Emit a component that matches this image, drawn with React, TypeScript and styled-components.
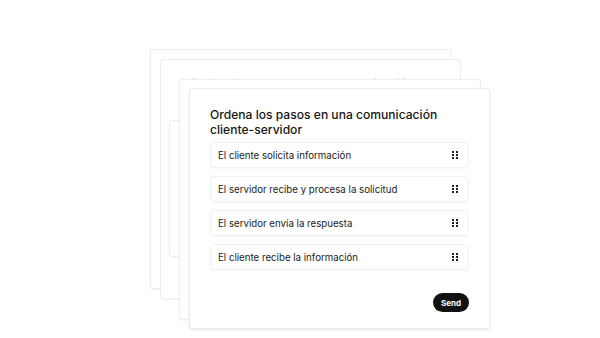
import React from "react";
import styled, { createGlobalStyle } from "styled-components";

const Global = createGlobalStyle`
  html, body { margin: 0; padding: 0; background: #ffffff; }
  body { font-family: Inter, "Noto Sans", sans-serif; color: #1a1a1a; }
`;

const Stage = styled.div`
  position: relative;
  width: 600px;
  height: 338px;
  overflow: hidden;
  background: #ffffff;
`;

const Card = styled.div<{ $x: number; $y: number; $w: number; $h: number; $front?: boolean }>`
  position: absolute;
  left: ${(p) => p.$x}px;
  top: ${(p) => p.$y}px;
  width: ${(p) => p.$w}px;
  height: ${(p) => p.$h}px;
  box-sizing: border-box;
  background: #ffffff;
  border: 1px solid ${(p) => (p.$front ? "#ececec" : "#ededed")};
  border-radius: 3px;
  box-shadow: ${(p) =>
    p.$front ? "0 1px 3px rgba(0,0,0,0.10)" : "0 1px 2px rgba(0,0,0,0.04)"};
  display: flex;
  flex-direction: column;
  padding: 18px 20px 16px 20px;
`;

const GhostText = styled.div`
  font-size: 12px;
  font-weight: 500;
  color: #e2e2e2;
  margin-top: -3px;
  margin-left: 8px;
  white-space: nowrap;
  filter: blur(0.5px);
`;

const Title = styled.h2`
  margin: 0;
  font-size: 12.1px;
  line-height: 15px;
  font-weight: 500;
  color: #161616;
`;

const List = styled.div`
  display: flex;
  flex-direction: column;
  gap: 8px;
  margin-top: 5px;
`;

const Row = styled.div`
  display: flex;
  align-items: center;
  justify-content: space-between;
  height: 26px;
  box-sizing: border-box;
  padding: 0 10px 0 7px;
  border: 1px solid #f1f1f1;
  border-radius: 3px;
  box-shadow: 0 1px 1px rgba(0, 0, 0, 0.03);
  font-size: 9.7px;
  color: #222;
`;

const Footer = styled.div`
  margin-top: auto;
  display: flex;
  justify-content: flex-end;
`;

const SendButton = styled.button`
  width: 36px;
  height: 19px;
  border: none;
  border-radius: 10px;
  background: #121212;
  color: #fff;
  font-family: Inter, sans-serif;
  font-size: 8px;
  font-weight: 700;
  padding: 0;
`;

const Grip = () => (
  <svg width="6" height="8" viewBox="0 0 6 8">
    {[0, 3, 6].map((y) =>
      [0, 4].map((x) => <rect key={`${x}-${y}`} x={x} y={y} width="2" height="2" fill="#222" />)
    )}
  </svg>
);

const steps = [
  "El cliente solicita información",
  "El servidor recibe y procesa la solicitud",
  "El servidor envía la respuesta",
  "El cliente recibe la información",
];

export default function App() {
  return (
    <>
      <Global />
      <Stage>
        <Card $x={150} $y={49} $w={301} $h={240} />
        <Card $x={160} $y={59} $w={301} $h={240}>
          <GhostText>Ordena los pasos en una comunicación</GhostText>
        </Card>
        <Card $x={169} $y={120} $w={40} $h={137} />
        <Card $x={179} $y={79} $w={302} $h={241} />
        <Card $x={189} $y={88} $w={301} $h={241} $front>
          <Title>
            Ordena los pasos en una comunicación
            <br />
            cliente-servidor
          </Title>
          <List>
            {steps.map((s) => (
              <Row key={s}>
                <span>{s}</span>
                <Grip />
              </Row>
            ))}
          </List>
          <Footer>
            <SendButton>Send</SendButton>
          </Footer>
        </Card>
      </Stage>
    </>
  );
}
